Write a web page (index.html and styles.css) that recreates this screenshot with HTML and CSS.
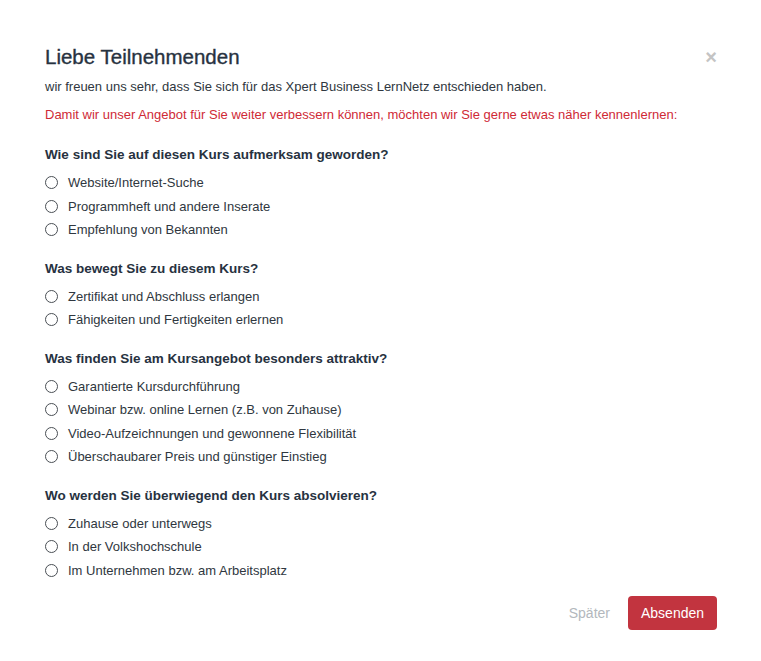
FILE: index.html
```html
<!DOCTYPE html>
<html lang="de">
<head>
<meta charset="utf-8">
<link rel="stylesheet" href="styles.css">
<title>Umfrage</title>
</head>
<body>
<div class="modal">
  <div class="header">
    <h1 class="title">Liebe Teilnehmenden</h1>
    <span class="close">×</span>
  </div>
  <p class="intro">wir freuen uns sehr, dass Sie sich für das Xpert Business LernNetz entschieden haben.</p>
  <p class="note">Damit wir unser Angebot für Sie weiter verbessern können, möchten wir Sie gerne etwas näher kennenlernen:</p>

  <div class="group">
    <div class="question">Wie sind Sie auf diesen Kurs aufmerksam geworden?</div>
    <label class="option"><span class="radio"></span>Website/Internet-Suche</label>
    <label class="option"><span class="radio"></span>Programmheft und andere Inserate</label>
    <label class="option"><span class="radio"></span>Empfehlung von Bekannten</label>
  </div>

  <div class="group">
    <div class="question">Was bewegt Sie zu diesem Kurs?</div>
    <label class="option"><span class="radio"></span>Zertifikat und Abschluss erlangen</label>
    <label class="option"><span class="radio"></span>Fähigkeiten und Fertigkeiten erlernen</label>
  </div>

  <div class="group">
    <div class="question">Was finden Sie am Kursangebot besonders attraktiv?</div>
    <label class="option"><span class="radio"></span>Garantierte Kursdurchführung</label>
    <label class="option"><span class="radio"></span>Webinar bzw. online Lernen (z.B. von Zuhause)</label>
    <label class="option"><span class="radio"></span>Video-Aufzeichnungen und gewonnene Flexibilität</label>
    <label class="option"><span class="radio"></span>Überschaubarer Preis und günstiger Einstieg</label>
  </div>

  <div class="group">
    <div class="question">Wo werden Sie überwiegend den Kurs absolvieren?</div>
    <label class="option"><span class="radio"></span>Zuhause oder unterwegs</label>
    <label class="option"><span class="radio"></span>In der Volkshochschule</label>
    <label class="option"><span class="radio"></span>Im Unternehmen bzw. am Arbeitsplatz</label>
  </div>

  <div class="footer">
    <button class="later">Später</button>
    <button class="submit">Absenden</button>
  </div>
</div>
</body>
</html>
```

FILE: styles.css
```css
html, body {
  margin: 0;
  padding: 0;
  background: #fff;
}
body {
  font-family: "Liberation Sans", Arial, sans-serif;
  font-size: 13px;
  color: #2f3740;
}
.modal {
  width: 672px;
  padding: 42px 44px 0 45px;
}
.header {
  display: flex;
  justify-content: space-between;
  align-items: flex-start;
}
.title {
  margin: 0;
  font-size: 20.5px;
  font-weight: 500;
  line-height: 30px;
  color: #27323f;
  -webkit-text-stroke: 0.35px #27323f;
}
.close {
  font-size: 20px;
  line-height: 30px;
  color: #c4c4c4;
  font-weight: bold;
  margin-right: 0;
}
.intro {
  margin: 5px 0 0;
  line-height: 20px;
}
.note {
  margin: 8px 0 0;
  line-height: 20px;
  color: #cf2a36;
}
.group {
  margin-top: 20px;
  display: flex;
  flex-direction: column;
}
.group + .group {
  margin-top: 17px;
}
.question {
  font-weight: bold;
  font-size: 13.5px;
  line-height: 20px;
  margin-bottom: 6px;
  color: #27323f;
}
.option {
  display: flex;
  align-items: center;
  height: 23.5px;
}
.radio {
  width: 11px;
  height: 11px;
  border: 1px solid #4a4f55;
  border-radius: 50%;
  margin-right: 10px;
  flex: none;
}
.footer {
  display: flex;
  justify-content: flex-end;
  align-items: center;
  gap: 18px;
  margin-top: 14px;
}
.later {
  border: 0;
  background: none;
  font: inherit;
  font-size: 14px;
  color: #b3b8bd;
  padding: 0;
}
.submit {
  border: 0;
  background: #c2343f;
  color: #fff;
  font: inherit;
  font-size: 14px;
  border-radius: 4px;
  width: 89px;
  height: 34px;
  padding: 0;
}
```
